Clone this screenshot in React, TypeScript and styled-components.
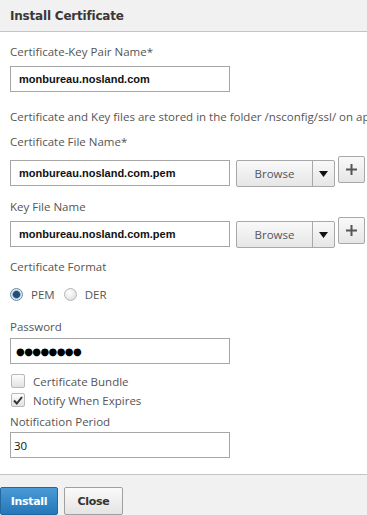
import React from 'react';
import styled, { createGlobalStyle } from 'styled-components';

const GlobalStyle = createGlobalStyle`
  html, body {
    margin: 0;
    padding: 0;
    background: #fff;
  }
  body {
    font-family: 'Open Sans', 'DejaVu Sans', sans-serif;
  }
`;

const Dialog = styled.div`
  width: 367px;
  height: 515px;
  overflow: hidden;
  display: flex;
  flex-direction: column;
  background: #fff;
`;

const Header = styled.div`
  height: 31px;
  flex-shrink: 0;
  background: #f1f1f1;
  border-bottom: 1px solid #c4c4c4;
  display: flex;
  align-items: center;
  padding-left: 10px;
`;

const Title = styled.h1`
  margin: 0;
  font-family: 'DejaVu Sans', sans-serif;
  font-size: 12px;
  font-weight: bold;
  color: #383838;
  letter-spacing: -0.2px;
`;

const Body = styled.div`
  flex: 1;
  padding: 12px 0 0 10px;
  display: flex;
  flex-direction: column;
`;

const Label = styled.div<{ $top?: number; $bottom?: number }>`
  font-size: 11.5px;
  line-height: 16px;
  height: 16px;
  color: #555;
  white-space: nowrap;
  margin-top: ${(p) => p.$top ?? 0}px;
  margin-bottom: ${(p) => p.$bottom ?? 5}px;
`;

const Row = styled.div`
  display: flex;
  align-items: flex-start;
`;

const TextBox = styled.div<{ $bold?: boolean }>`
  box-sizing: border-box;
  width: 220px;
  height: 26px;
  border: 1px solid #a6a6a6;
  background: #fff;
  display: flex;
  align-items: center;
  padding-left: ${(p) => (p.$bold ? 8 : 3)}px;
  font-family: ${(p) => (p.$bold ? "'Liberation Sans', Arial, sans-serif" : "'Open Sans', sans-serif")};
  font-size: ${(p) => (p.$bold ? 11 : 11.5)}px;
  font-weight: ${(p) => (p.$bold ? 'bold' : 'normal')};
  color: #111;
  white-space: nowrap;
`;

const Dots = styled.span`
  font-family: 'DejaVu Sans', sans-serif;
  font-size: 10px;
  letter-spacing: -0.6px;
  color: #000;
  padding-left: 2px;
`;

const SplitButton = styled.div`
  box-sizing: border-box;
  margin-left: 6px;
  width: 99px;
  height: 27px;
  border: 1px solid #a8a8a8;
  border-radius: 2px;
  background: linear-gradient(#f9f9f9, #e6e6e6);
  display: flex;
`;

const BrowseLabel = styled.div`
  flex: 1;
  display: flex;
  align-items: center;
  justify-content: center;
  font-size: 11.5px;
  color: #555;
  border-right: 1px solid #a8a8a8;
`;

const Caret = styled.div`
  width: 21px;
  display: flex;
  align-items: center;
  justify-content: center;
`;

const PlusButton = styled.div`
  box-sizing: border-box;
  margin: -4px 0 0 3px;
  width: 27px;
  height: 27px;
  border: 1px solid #a8a8a8;
  border-radius: 2px;
  background: linear-gradient(#f9f9f9, #e6e6e6);
  display: flex;
  align-items: center;
  justify-content: center;
`;

const Info = styled.div`
  font-size: 11.5px;
  line-height: 16px;
  color: #555;
  white-space: nowrap;
  margin-top: 17px;
`;

const RadioGroup = styled.div`
  display: flex;
  align-items: center;
  height: 16px;
  margin-top: 11px;
`;

const RadioItem = styled.label`
  display: flex;
  align-items: center;
  font-size: 11.5px;
  color: #555;
  margin-right: 9px;
`;

const RadioDot = styled.span<{ $on?: boolean }>`
  box-sizing: border-box;
  width: 13px;
  height: 13px;
  border-radius: 50%;
  border: 1px solid ${(p) => (p.$on ? '#6c8aa3' : '#b5b5b5')};
  background: ${(p) =>
    p.$on
      ? 'radial-gradient(circle, #1f4f78 0 3px, #4a7ca5 3.5px, #dfe8ef 4.5px)'
      : 'radial-gradient(circle at 40% 35%, #fff, #d8d8d8)'};
  margin-right: 8px;
`;

const CheckRow = styled.label<{ $top: number }>`
  display: flex;
  align-items: center;
  height: 16px;
  margin-top: ${(p) => p.$top}px;
  font-size: 11.5px;
  color: #555;
  margin-left: 1px;
`;

const CheckBox = styled.span`
  box-sizing: border-box;
  width: 14px;
  height: 14px;
  border: 1px solid #b8b8b8;
  border-radius: 2px;
  background: linear-gradient(#fdfdfd, #e2e2e2);
  margin-right: 8px;
  display: flex;
  align-items: center;
  justify-content: center;
`;

const Footer = styled.div`
  height: 41px;
  flex-shrink: 0;
  border-top: 1px solid #c4c4c4;
  background: #f1f1f1;
  display: flex;
  gap: 6px;
  padding-top: 12px;
  box-sizing: border-box;
  align-items: flex-start;
`;

const ActionButton = styled.button<{ $primary?: boolean }>`
  box-sizing: border-box;
  height: 28px;
  width: ${(p) => (p.$primary ? 58 : 59)}px;
  border: 1px solid ${(p) => (p.$primary ? '#22679e' : '#a0a0a0')};
  border-radius: 2px;
  background: ${(p) =>
    p.$primary ? 'linear-gradient(#4a9ad6, #2677b8)' : 'linear-gradient(#fafafa, #e4e4e4)'};
  color: ${(p) => (p.$primary ? '#fff' : '#333')};
  font-family: 'DejaVu Sans', sans-serif;
  font-size: 11px;
  font-weight: bold;
  letter-spacing: -0.3px;
  padding: 0;
`;

const FileRow: React.FC<{ value: string }> = ({ value }) => (
  <Row>
    <TextBox $bold>{value}</TextBox>
    <SplitButton>
      <BrowseLabel>Browse</BrowseLabel>
      <Caret>
        <svg width="9" height="6" viewBox="0 0 9 6">
          <path d="M0 0 H9 L4.5 6 Z" fill="#111" />
        </svg>
      </Caret>
    </SplitButton>
    <PlusButton>
      <svg width="11" height="11" viewBox="0 0 11 11">
        <path d="M5.5 0 V11 M0 5.5 H11" stroke="#555" strokeWidth="2" />
      </svg>
    </PlusButton>
  </Row>
);

const App: React.FC = () => {
  return (
    <>
      <GlobalStyle />
      <Dialog>
        <Header>
          <Title>Install Certificate</Title>
        </Header>
        <Body>
          <Label $bottom={6}>Certificate-Key Pair Name*</Label>
          <TextBox $bold>monbureau.nosland.com</TextBox>

          <Info>Certificate and Key files are stored in the folder /nsconfig/ssl/ on appliance</Info>

          <Label $top={9} $bottom={10}>Certificate File Name*</Label>
          <FileRow value="monbureau.nosland.com.pem" />

          <Label $top={12} $bottom={6}>Key File Name</Label>
          <FileRow value="monbureau.nosland.com.pem" />

          <Label $top={11} $bottom={0}>Certificate Format</Label>
          <RadioGroup>
            <RadioItem>
              <RadioDot $on />
              PEM
            </RadioItem>
            <RadioItem>
              <RadioDot />
              DER
            </RadioItem>
          </RadioGroup>

          <Label $top={17} $bottom={3}>Password</Label>
          <TextBox>
            <Dots>●●●●●●●●</Dots>
          </TextBox>

          <CheckRow $top={9}>
            <CheckBox />
            Certificate Bundle
          </CheckRow>
          <CheckRow $top={3}>
            <CheckBox>
              <svg width="10" height="9" viewBox="0 0 10 9">
                <path d="M1 4.5 L3.8 7.5 L9 1" stroke="#333" strokeWidth="2" fill="none" />
              </svg>
            </CheckBox>
            Notify When Expires
          </CheckRow>

          <Label $top={6} $bottom={2}>Notification Period</Label>
          <TextBox>30</TextBox>
        </Body>
        <Footer>
          <ActionButton $primary>Install</ActionButton>
          <ActionButton>Close</ActionButton>
        </Footer>
      </Dialog>
    </>
  );
};

export default App;
